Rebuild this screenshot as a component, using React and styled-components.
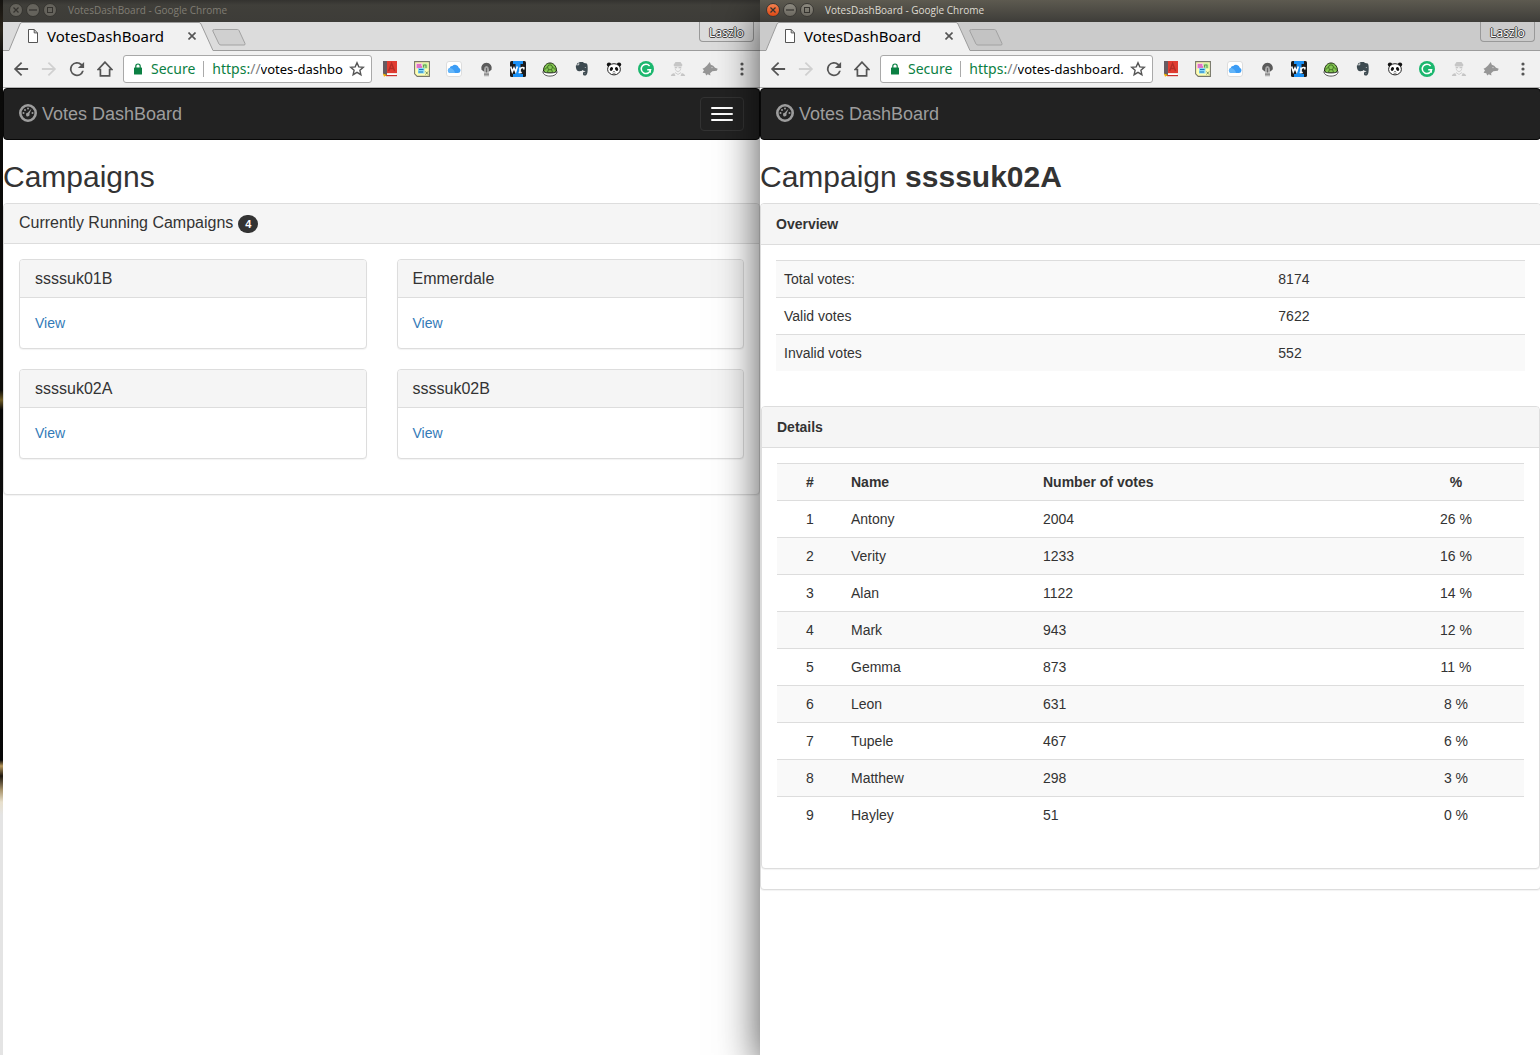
import React from "react";
import styled, { createGlobalStyle } from "styled-components";

const UI_FONT = '"Noto Sans", "Open Sans", sans-serif';
const TITLE_FONT = '"Open Sans", "Noto Sans", sans-serif';
const PAGE_FONT = '"Liberation Sans", Arial, sans-serif';

const GlobalStyle = createGlobalStyle`
  *, *::before, *::after { box-sizing: border-box; }
  body {
    margin: 0;
    background: #fff;
    color: #333;
    font: 14px/20px ${PAGE_FONT};
  }
  h1, h2, h3, p { margin: 0; font-weight: normal; }
  button, input { font: inherit; color: inherit; margin: 0; padding: 0; border: 0; background: none; }
  svg { display: block; flex: none; }
`;

/* ---------- desktop and windows ---------- */

const Desktop = styled.div`
  display: flex;
  min-height: 100vh;
  padding-left: 3px;
  overflow: hidden;
  background: linear-gradient(#14120f, #2a241a 30px, #0a0a09 60px, #0c0b0a 390px, #6d5a24 400px, #080808 410px,
    #101010 540px, #060606 760px, #b8985c 766px, #1c160e 776px, #a8946c 790px, #e8e0cc 802px, #e4e4e4 815px);
`;

const Window = styled.section`
  position: relative;
  display: flex;
  flex-direction: column;
  flex: ${(p) => p.$grow} 1 0;
  min-width: 0;
  background: #fff;
  margin-right: ${(p) => (p.$active ? "-1px" : "0")};
  box-shadow: ${(p) => (p.$active ? "0 12px 40px rgba(0, 0, 0, 0.7)" : "none")};
`;

const TitleBar = styled.header`
  display: flex;
  align-items: center;
  height: 22px;
  padding: 0 6px 3px;
  gap: 3px;
  background: ${(p) => (p.$active ? "linear-gradient(#5d5a50, #3e3d39)" : "linear-gradient(#33322f, #403f3a 5px, #3d3c38)")};
`;

const WindowButton = styled.button`
  display: grid;
  place-items: center;
  width: 14px;
  height: 14px;
  border-radius: 50%;
  border: 1px solid ${(p) => (p.$active ? "#3a3834" : "#353430")};
  background: ${(p) => (p.$close ? "linear-gradient(#f4814f, #dd4814)" : p.$active ? "linear-gradient(#8d8a80, #6b6860)" : "#65635c")};
  color: #35332f;
`;

const WindowTitle = styled.h1`
  margin-left: 8px;
  font: 500 10px/14px ${TITLE_FONT};
  color: ${(p) => (p.$active ? "#dfdbd2" : "#807d74")};
  white-space: nowrap;
`;

const TabStrip = styled.div`
  display: flex;
  height: 29px;
  padding: 0 6px;
  background: ${(p) => (p.$active ? "#cbcbcb" : "#dcdcdc")};
  box-shadow: inset 0 -1px #9c9c9c;
`;

const Tab = styled.div`
  position: relative;
  display: flex;
  align-items: center;
  width: 202px;
  height: 29px;
  padding: 0 13px 2px 19px;
  font: 15px/20px ${UI_FONT};
  color: #000;
`;

const TabShape = styled.svg`
  position: absolute;
  left: 0;
  top: 0;
`;

const TabTitle = styled.span`
  position: relative;
  flex: 1;
  margin-left: 9px;
  white-space: nowrap;
`;

const TabPart = styled.span`
  position: relative;
`;

const TabClose = styled.button`
  position: relative;
  display: grid;
  place-items: center;
  width: 12px;
  height: 12px;
`;

const NewTab = styled.button`
  align-self: center;
  margin-right: auto;
  padding-top: 2px;
`;

const UserButton = styled.button`
  width: 55px;
  height: 20px;
  border: solid #999;
  border-width: 0 1px 1px;
  border-radius: 0 0 4px 4px;
  font: 12px/22px ${UI_FONT};
  color: #fff;
  text-shadow: 1px 0 #444, -1px 0 #444, 0 1px #444, 0 -1px #444;
`;

const Toolbar = styled.nav`
  display: flex;
  align-items: center;
  height: 37px;
  padding: 0 10px;
  background: #f1f1f1;
  border-bottom: 1px solid #b0b0b0;
  color: #555;
`;

const NavGroup = styled.div`
  display: flex;
  gap: 12px;
`;

const ExtensionGroup = styled.div`
  display: flex;
  gap: 16px;
`;

const IconButton = styled.button`
  width: 16px;
  height: 16px;
  color: ${(p) => (p.disabled ? "#d0d0d0" : "#555")};
`;

const Omnibox = styled.div`
  display: flex;
  align-items: center;
  flex: 1;
  min-width: 0;
  height: 28px;
  margin: 0 10px;
  padding: 0 6px 0 10px;
  border: 1px solid #a9a9a9;
  border-radius: 3px;
  background: #fff;
  font: 14px/20px ${UI_FONT};
`;

const Secure = styled.span`
  margin-left: 9px;
  padding-right: 8px;
  color: #0b8043;
`;

const Divider = styled.span`
  width: 1px;
  height: 16px;
  margin-right: 8px;
  background: #aaa;
`;

const Scheme = styled.label`
  color: #0b8043;
`;

const Slashes = styled.span`
  color: #808080;
`;

const Address = styled.input`
  flex: 1;
  min-width: 0;
  height: 20px;
  margin-right: 6px;
  outline: 0;
  font-size: 13px;
  color: #000;
`;

/* ---------- dashboard page ---------- */

const Page = styled.main`
  flex: 1;
`;

const Navbar = styled.nav`
  display: flex;
  align-items: center;
  justify-content: space-between;
  min-height: 52px;
  padding: 0 15px;
  margin-bottom: 20px;
  border: 1px solid #080808;
  border-radius: 4px;
  background: #222;
`;

const Brand = styled.a`
  display: flex;
  align-items: flex-start;
  gap: 5px;
  font-size: 18px;
  line-height: 21px;
  color: #9d9d9d;
  text-decoration: none;
`;

const MenuToggle = styled.button`
  display: flex;
  flex-direction: column;
  align-items: center;
  justify-content: center;
  gap: 4px;
  width: 44px;
  height: 34px;
  border: 1px solid #333;
  border-radius: 4px;
`;

const Bar = styled.span`
  width: 22px;
  height: 2px;
  border-radius: 1px;
  background: #fff;
`;

const PageTitle = styled.h2`
  margin-bottom: 10px;
  font-size: 30px;
  line-height: 33px;
`;

const Panel = styled.section`
  margin-bottom: 20px;
  border: 1px solid #ddd;
  border-radius: 4px;
  background: #fff;
  box-shadow: 0 1px 1px rgba(0, 0, 0, 0.05);
`;

const PanelHeading = styled.header`
  padding: 10px 15px;
  border-bottom: 1px solid #ddd;
  border-radius: 3px 3px 0 0;
  background: #f5f5f5;
  font-weight: ${(p) => (p.$bold ? "bold" : "normal")};
`;

const PanelTitle = styled.h3`
  display: flex;
  align-items: flex-end;
  gap: 5px;
  min-height: ${(p) => (p.$small ? "17px" : "19px")};
  font-size: 16px;
  line-height: ${(p) => (p.$small ? "17px" : "20px")};
  height: ${(p) => (p.$small ? "17px" : "19px")};
`;

const Badge = styled.span`
  min-width: 20px;
  height: 18px;
  border-radius: 10px;
  background: #333;
  color: #fff;
  font: bold 11px/18px ${PAGE_FONT};
  text-align: center;
`;

const PanelBody = styled.div`
  padding: 15px;
`;

const CardGrid = styled.div`
  display: grid;
  grid-template-columns: 1fr 1fr;
  column-gap: 30px;
`;

const Link = styled.a`
  color: #337ab7;
  text-decoration: none;
`;

const Table = styled.table`
  width: 100%;
  margin-bottom: 20px;
  table-layout: fixed;
  border-collapse: separate;
  border-spacing: 0;

  tr:nth-child(odd) { background: #f9f9f9; }
  thead + tbody tr:nth-child(odd) { background: transparent; }
  thead + tbody tr:nth-child(even) { background: #f9f9f9; }
`;

const Cell = styled.td`
  padding: 8px;
  border-top: 1px solid #ddd;
  text-align: ${(p) => (p.$center ? "center" : "left")};
  font-weight: ${(p) => (p.as === "th" ? "bold" : "normal")};
`;

const Column = styled.col`
  width: ${(p) => p.$width};
`;

/* ---------- icons ---------- */

const Material = ({ d }) => (
  <svg width="16" height="16" viewBox="3 3 18 18" fill="currentColor"><path d={d} /></svg>
);

const BackIcon = () => <Material d="M20 11H7.8l5.6-5.6L12 4l-8 8 8 8 1.4-1.4L7.8 13H20z" />;
const ForwardIcon = () => <Material d="M4 11h12.2l-5.6-5.6L12 4l8 8-8 8-1.4-1.4 5.6-5.6H4z" />;
const ReloadIcon = () => (
  <Material d="M17.65 6.35A8 8 0 1 0 19.73 14h-2.08A6 6 0 1 1 12 6c1.66 0 3.14.69 4.22 1.78L13 11h7V4z" />
);
const HomeIcon = () => (
  <svg width="16" height="16" viewBox="0 0 16 16" fill="none" stroke="currentColor" strokeWidth="1.7">
    <path d="M8 1.2 1.2 8.5h2.2v6.3h9.2V8.5h2.2z" />
  </svg>
);
const FileIcon = () => (
  <svg width="10" height="14" viewBox="0 0 10 14" fill="#fff" stroke="#555">
    <path d="M.5.5h5.7l3.3 3.4v9.6h-9zM6.2.5v3.4h3.3" />
  </svg>
);
const CrossIcon = () => (
  <svg width="8" height="8" viewBox="0 0 8 8" stroke="#555" strokeWidth="1.6"><path d="m.5.5 7 7m0-7-7 7" /></svg>
);
const LockIcon = () => (
  <svg width="8" height="12" viewBox="0 0 8 12" fill="#0b8043">
    <rect y="4.5" width="8" height="7" rx=".6" />
    <path d="M1.8 5V3.2a2.2 2.2 0 0 1 4.4 0V5" fill="none" stroke="#0b8043" strokeWidth="1.2" />
  </svg>
);
const StarIcon = () => (
  <svg width="16" height="16" viewBox="0 0 16 16" fill="none" stroke="#555" strokeWidth="1.4">
    <path d="m8 1.8 1.8 4.1 4.5.4-3.4 3 1 4.4L8 11.4l-3.9 2.3 1-4.4-3.4-3 4.5-.4z" />
  </svg>
);
const MenuIcon = () => (
  <svg width="16" height="16" viewBox="0 0 16 16" fill="currentColor">
    <circle cx="8" cy="3" r="1.6" /><circle cx="8" cy="8" r="1.6" /><circle cx="8" cy="13" r="1.6" />
  </svg>
);
const GaugeIcon = () => (
  <svg width="18" height="18" viewBox="0 0 18 18">
    <circle cx="9" cy="9" r="7.7" fill="none" stroke="#9d9d9d" strokeWidth="2.6" />
    <g fill="#9d9d9d">
      <circle cx="4.5" cy="9" r="1" /><circle cx="6" cy="6" r="1" /><circle cx="9" cy="4.6" r="1" />
      <circle cx="13.5" cy="9" r="1" />
      <path d="M12.6 4.6 10.4 9.8a1.8 1.8 0 1 1-1.7-1z" />
    </g>
  </svg>
);

const Ext = ({ children }) => <svg width="16" height="16" viewBox="0 0 16 16">{children}</svg>;

const extensions = [
  ["Dictionary", <Ext>
    <path d="M1 0h4v15H3L1 13z" fill="#665b61" /><path d="M5 0h10v12H5z" fill="#e03c31" />
    <path d="M5 12h10v1H5z" fill="#f5e5e2" /><path d="M5 13h9v1H5z" fill="#fff" /><path d="M4 14h11v1.2H4z" fill="#c9302c" />
    <path d="m6.6 10 3-7.5 3 7.5M7.6 7.5h4" fill="none" stroke="#b52d26" strokeWidth="1.4" />
    <path d="M1 12.5 5 14l-3 1.8z" fill="#f4b400" />
  </Ext>],
  ["Notes board", <Ext>
    <path d="M.6.6h14.8v14.8H3.2L.6 12.8z" fill="#ffffb3" stroke="#77776a" strokeWidth="1.1" />
    <path d="M2 2.5h6.5v5H2z" fill="#f7b0ee" /><path d="M8.5 2.5h5v5h-5z" fill="#a8ee90" /><path d="M4 7h6.5v5.500H4z" fill="#88d8fa" />
    <path d="M3 4h4M3 6h5" stroke="#c3389e" /><path d="M5 8.500h4.500M4.500 11h4.500" stroke="#1677b8" />
    <path d="M9.500 6.500V4H12v3M11.500 10.500l2.500 3m0-3-2.500 3" stroke="#668855" strokeWidth=".9" fill="none" />
  </Ext>],
  ["Cloud", <Ext>
    <rect x=".5" y=".5" width="15" height="15" rx="2.5" fill="#fff" stroke="#ddd" />
    <path d="M4.500 12a2.600 2.600 0 0 1-.8-5.100 2.400 2.400 0 0 1 2.600-1.900 3.900 3.900 0 0 1 6.500 1.800A2.700 2.700 0 0 1 12 12z" fill="#3b9cf5" />
    <path d="M4.500 12a2.600 2.600 0 0 1-.8-5.100C6 6.900 8.500 9 9 12z" fill="#62b5f9" />
  </Ext>],
  ["Lamp", <Ext>
    <path d="M3.500 8.800A5.300 5.300 0 1 1 13.500 8.800L10.500 11V8a2 2 0 0 0-4 0v3z" fill="#5a5a5a" />
    <path d="M6.800 6.300q1.700-2.600 3.400 0v5H6.800z" fill="#a5a5a5" /><path d="M8 7h1v5H8z" fill="#666" />
    <path d="M6 11.300h5v4H6z" fill="#b4b4b4" /><path d="M6 13.200h5" stroke="#808080" />
  </Ext>],
  ["Writer", <Ext>
    <rect width="16" height="16" rx="1.500" fill="#1c1c1c" />
    <path d="M3 0h10v3h-2.500v10H13v3H3v-3h2.500V3H3z" fill="#1a90f5" />
    <path d="m.7 5.500 1.600 5.300L4 7l1.700 3.800 1.600-5.300M10 6.500v5m0-3c.8-1.800 2.400-2.200 4-1.800M8.600 11.500h3.200M13.800 6v2.500" fill="none" stroke="#fff" strokeWidth="1.600" />
  </Ext>],
  ["Turtle", <Ext>
    <path d="M1.500 10C1.500 5 4.500 2 8 2s6.500 3 6.500 8L12 12H4z" fill="#83c551" stroke="#18240c" />
    <path d="m5.500 6 1.200-2h2.600l1.200 2-1 2.700h-3zM2.300 9l3.200-3M13.700 9l-3.200-3M6.500 8.700 5.300 11.500m4.200-2.800 1.200 2.800" fill="none" stroke="#35621a" strokeWidth=".8" />
    <path d="M.8 10.700c2.500 1 4.500 1.300 7.200 1.300s4.700-.3 7.200-1.300c-.4 2.700-3 4.400-7.200 4.400S1.200 13.400.8 10.700z" fill="#fff" stroke="#333" strokeWidth=".8" />
  </Ext>],
  ["Clipper", <Ext>
    <path d="M5.200 1h3.600c.5 0 .8.800 1.300 1l2.600.4c.8.300 1.100 3 1 6.200-.1 3.500-.7 6-2.500 6-2 0-2.400-1-2.200-2.400.1-1 .8-1.500 2.200-1.400v1.500c-.8 0-.9.800 0 .8V10c-1 .1-2-.2-2.700-1-.5 1.500-4.300 1.500-5.400.5C2 8.500 1.600 5 2 4.300h2.600c.4 0 .6-.2.600-.7z" fill="#3d4a50" />
    <path d="M2.300 3.600 4.500 1.300v2.300z" fill="#3d4a50" /><path d="M10.500 6.500c.4-.8 1.400-.8 1.700.2z" fill="#f1f1f1" />
  </Ext>],
  ["Panda", <Ext>
    <circle cx="3" cy="3.600" r="2.200" fill="#111" /><circle cx="13" cy="3.600" r="2.200" fill="#111" />
    <ellipse cx="8" cy="8.300" rx="6.400" ry="5.600" fill="#fff" stroke="#222" />
    <ellipse cx="5.400" cy="8" rx="1.500" ry="1.900" transform="rotate(30 5.400 8)" fill="#111" />
    <ellipse cx="10.600" cy="8" rx="1.500" ry="1.900" transform="rotate(-30 10.600 8)" fill="#111" />
    <path d="M7 10.300h2l-1 1z" fill="#111" /><path d="M6.500 12q1.500 1 3 0" fill="none" stroke="#555" strokeWidth=".7" />
  </Ext>],
  ["Grammar", <Ext>
    <circle cx="8" cy="8" r="8" fill="#1bb76e" />
    <path d="M11.600 4.900A4.700 4.700 0 1 0 12.600 8.700H9.200" fill="none" stroke="#fff" strokeWidth="1.500" />
    <path d="M12.300 8.500v3.300" stroke="#fff" strokeWidth="1.200" />
  </Ext>],
  ["Agent", <Ext>
    <g fill="#c6c6c6"><path d="M3.500 4 5.500 1h5l2 3-1 1.500h-7z" /><path d="M4.500 6h2.700v1.200H5zM8.500 6h3l-.5 1.200H8.500z" />
      <path d="M.8 15c.2-1.600 1.800-2.600 3.400-3l1.300 3zM15.200 15c-.2-1.600-1.800-2.600-3.400-3l-1.300 3z" /></g>
    <path d="M5.200 7.500c.3 2 1.500 3 2.800 3s2.500-1 2.800-3M5 11.500l3 2 3-2" fill="none" stroke="#cfcfcf" />
  </Ext>],
  ["Wolf", <Ext>
    <path d="M5 4.500 7.800 1l1 2.800 2.400 1L13 6.800l2.700 1-.9 2-4.500.5-2.200 1.900.3 2.300-2.600-1.200-1.600 1.200-.9-2.200-2.700-.5L2 9.300.5 7.800l2-1z" fill="#969696" />
    <circle cx="10" cy="6.600" r=".6" fill="#ddd" />
  </Ext>],
];

/* ---------- composed parts ---------- */

function BrowserWindow({ active, grow, address, toggle, children }) {
  const id = active ? "address-campaign" : "address-home";
  return (
    <Window $active={active} $grow={grow}>
      <TitleBar $active={active}>
        <WindowButton $active={active} $close={active} aria-label="Close">
          <svg width="6" height="6" viewBox="0 0 6 6" stroke="currentColor" strokeWidth="1.2"><path d="m.5.5 5 5m0-5-5 5" /></svg>
        </WindowButton>
        <WindowButton $active={active} aria-label="Minimize">
          <svg width="8" height="2" viewBox="0 0 8 2" fill="currentColor"><path d="M0 .4h8v1.200H0z" /></svg>
        </WindowButton>
        <WindowButton $active={active} aria-label="Maximize">
          <svg width="6" height="6" viewBox="0 0 6 6" fill="none" stroke="currentColor"><rect x=".5" y=".5" width="5" height="5" /></svg>
        </WindowButton>
        <WindowTitle $active={active}>VotesDashBoard - Google Chrome</WindowTitle>
      </TitleBar>
      <TabStrip $active={active}>
        <Tab>
          <TabShape width="204" height="29" viewBox="0 0 204 29">
            <path d="M0 28.500 11 2Q11.700.5 13 .5H190Q191.300.5 192 2L204 28.500V29H0z" fill="#f1f1f1" />
            <path d="M0 28.500 11 2Q11.700.5 13 .5H190Q191.300.5 192 2L204 28.500" fill="none" stroke="#9c9c9c" />
          </TabShape>
          <TabPart><FileIcon /></TabPart>
          <TabTitle>VotesDashBoard</TabTitle>
          <TabClose aria-label="Close tab"><CrossIcon /></TabClose>
        </Tab>
        <NewTab aria-label="New tab">
          <svg width="36" height="19" viewBox="0 0 36 19">
            <path d="M3.500 1.500h23q1 0 1.500 1l6 13q.5 1.500-1 1.500H10q-1.500 0-2-1L1.800 3q-.5-1.500 1.700-1.500z" fill={active ? "#c3c3c3" : "#d0d0d0"} stroke="#a2a2a2" />
          </svg>
        </NewTab>
        <UserButton>Laszlo</UserButton>
      </TabStrip>
      <Toolbar>
        <NavGroup>
          <IconButton aria-label="Back"><BackIcon /></IconButton>
          <IconButton aria-label="Forward" disabled><ForwardIcon /></IconButton>
          <IconButton aria-label="Reload"><ReloadIcon /></IconButton>
          <IconButton aria-label="Home"><HomeIcon /></IconButton>
        </NavGroup>
        <Omnibox>
          <LockIcon />
          <Secure>Secure</Secure>
          <Divider />
          <Scheme htmlFor={id}>https:<Slashes>//</Slashes></Scheme>
          <Address id={id} defaultValue={address} />
          <IconButton aria-label="Bookmark"><StarIcon /></IconButton>
        </Omnibox>
        <ExtensionGroup>
          {extensions.map(([name, icon]) => (
            <IconButton key={name} aria-label={name}>{icon}</IconButton>
          ))}
          <IconButton aria-label="Menu"><MenuIcon /></IconButton>
        </ExtensionGroup>
      </Toolbar>
      <Page>
        <Navbar>
          <Brand href="#"><GaugeIcon />Votes DashBoard</Brand>
          {toggle && <MenuToggle aria-label="Toggle navigation"><Bar /><Bar /><Bar /></MenuToggle>}
        </Navbar>
        {children}
      </Page>
    </Window>
  );
}

const campaigns = ["ssssuk01B", "Emmerdale", "ssssuk02A", "ssssuk02B"];

const totals = [["Total votes:", 8174], ["Valid votes", 7622], ["Invalid votes", 552]];

const candidates = [
  ["Antony", 2004, 26], ["Verity", 1233, 16], ["Alan", 1122, 14], ["Mark", 943, 12], ["Gemma", 873, 11],
  ["Leon", 631, 8], ["Tupele", 467, 6], ["Matthew", 298, 3], ["Hayley", 51, 0],
];

export default function App() {
  return (
    <>
      <GlobalStyle />
      <Desktop>
        <BrowserWindow grow={757} address="votes-dashbo" toggle>
          <PageTitle>Campaigns</PageTitle>
          <Panel>
            <PanelHeading>
              <PanelTitle>Currently Running Campaigns <Badge>4</Badge></PanelTitle>
            </PanelHeading>
            <PanelBody>
              <CardGrid>
                {campaigns.map((name) => (
                  <Panel key={name}>
                    <PanelHeading><PanelTitle $small>{name}</PanelTitle></PanelHeading>
                    <PanelBody><Link href="#">View</Link></PanelBody>
                  </Panel>
                ))}
              </CardGrid>
            </PanelBody>
          </Panel>
        </BrowserWindow>
        <BrowserWindow active grow={781} address="votes-dashboard.">
          <PageTitle>Campaign <strong>ssssuk02A</strong></PageTitle>
          <Panel>
            <PanelHeading $bold>Overview</PanelHeading>
            <PanelBody>
              <Table>
                <colgroup><Column $width="66%" /><Column $width="34%" /></colgroup>
                <tbody>
                  {totals.map(([label, value]) => (
                    <tr key={label}><Cell>{label}</Cell><Cell>{value}</Cell></tr>
                  ))}
                </tbody>
              </Table>
            </PanelBody>
            <Panel>
              <PanelHeading $bold>Details</PanelHeading>
              <PanelBody>
                <Table>
                  <colgroup>
                    <Column $width="66px" /><Column $width="192px" /><Column /><Column $width="136px" />
                  </colgroup>
                  <thead>
                    <tr>
                      <Cell as="th" $center>#</Cell><Cell as="th">Name</Cell>
                      <Cell as="th">Number of votes</Cell><Cell as="th" $center>%</Cell>
                    </tr>
                  </thead>
                  <tbody>
                    {candidates.map(([name, votes, share], i) => (
                      <tr key={name}>
                        <Cell $center>{i + 1}</Cell><Cell>{name}</Cell><Cell>{votes}</Cell><Cell $center>{`${share} %`}</Cell>
                      </tr>
                    ))}
                  </tbody>
                </Table>
              </PanelBody>
            </Panel>
          </Panel>
        </BrowserWindow>
      </Desktop>
    </>
  );
}
